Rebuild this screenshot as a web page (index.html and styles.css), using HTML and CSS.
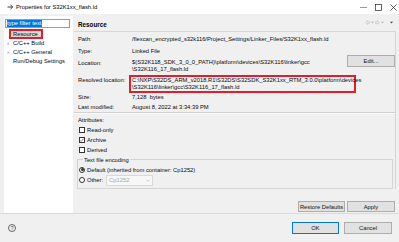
FILE: index.html
```html
<!DOCTYPE html>
<html>
<head>
<meta charset="utf-8">
<link rel="stylesheet" href="styles.css">
</head>
<body>
<div class="window">
  <div class="titlebar">
    <svg class="app-icon" width="7" height="6" viewBox="0 0 7 6"><path d="M0.5 3H5M3.5 1L5.8 3L3.5 5" fill="none" stroke="#3a3a3a" stroke-width="1"/></svg>
    <span class="title">Properties for S32K1xx_flash.ld</span>
    <div class="winctrls">
      <svg width="7" height="7" viewBox="0 0 7 7"><path d="M0 3.5H7" stroke="#555" stroke-width="0.6"/></svg>
      <svg width="7" height="7" viewBox="0 0 7 7"><rect x="0.5" y="0.5" width="6" height="6" fill="none" stroke="#222" stroke-width="0.7"/></svg>
      <svg width="7" height="7" viewBox="0 0 7 7"><path d="M0.5 0.5L6.5 6.5M6.5 0.5L0.5 6.5" stroke="#222" stroke-width="0.7"/></svg>
    </div>
  </div>
  <div class="main">
    <div class="sidebar">
      <div class="filter"><span class="sel">type filter text</span></div>
      <ul class="tree">
        <li class="item current"><span class="hl">Resource</span></li>
        <li class="item"><span class="exp">›</span>C/C++ Build</li>
        <li class="item"><span class="exp">›</span>C/C++ General</li>
        <li class="item"><span class="exp"></span>Run/Debug Settings</li>
      </ul>
    </div>
    <div class="content">
      <div class="header">
        <span class="heading">Resource</span>
        <div class="nav">
          <svg width="5" height="5" viewBox="0 0 5 5"><path d="M2.5 0.5L0.5 2.5L2.5 4.5V3.3H4.5V1.7H2.5Z" fill="none" stroke="#b5b5b5" stroke-width="0.5"/></svg>
          <svg width="3" height="3" viewBox="0 0 3 3"><path d="M0 0.8H3L1.5 2.4Z" fill="#b5b5b5"/></svg>
          <svg width="5" height="5" viewBox="0 0 5 5"><path d="M2.5 0.5L4.5 2.5L2.5 4.5V3.3H0.5V1.7H2.5Z" fill="none" stroke="#b5b5b5" stroke-width="0.5"/></svg>
          <svg width="3" height="3" viewBox="0 0 3 3"><path d="M0 0.8H3L1.5 2.4Z" fill="#b5b5b5"/></svg>
          <svg class="gap" width="3" height="3" viewBox="0 0 3 3"><path d="M0 0.8H3L1.5 2.4Z" fill="#444"/></svg>
        </div>
      </div>
      <div class="body">
        <div class="row r-path"><span class="lbl">Path:</span><span class="val">/flexcan_encrypted_s32k116/Project_Settings/Linker_Files/S32K1xx_flash.ld</span></div>
        <div class="row r-type"><span class="lbl">Type:</span><span class="val">Linked File</span></div>
        <div class="row r-loc">
          <span class="lbl">Location:</span>
          <span class="val two">$(S32K118_SDK_3_0_0_PATH)\platform\devices\S32K116\linker\gcc<br>\S32K116_17_flash.ld</span>
          <span class="btn edit">Edit...</span>
        </div>
        <div class="row r-res">
          <span class="lbl">Resolved location:</span>
          <span class="val redbox">C:\NXP\S32DS_ARM_v2018.R1\S32DS\S32SDK_S32K1xx_RTM_3.0.0\platform\devices<br>\S32K116\linker\gcc\S32K116_17_flash.ld</span>
        </div>
        <div class="row r-size"><span class="lbl">Size:</span><span class="val">7,128&nbsp; bytes</span></div>
        <div class="row r-mod"><span class="lbl">Last modified:</span><span class="val">August 8, 2022 at 3:34:39 PM</span></div>
        <div class="sep"></div>
        <div class="attrs-title">Attributes:</div>
        <div class="check"><span class="box"></span>Read-only</div>
        <div class="check"><span class="box"><svg width="6" height="6" viewBox="0 0 6 6"><path d="M1 3.2L2.4 4.6L5 1.4" fill="none" stroke="#333" stroke-width="0.6"/></svg></span>Archive</div>
        <div class="check"><span class="box"></span>Derived</div>
        <fieldset class="group">
          <legend>Text file encoding</legend>
          <div class="radio-row r1"><span class="radio on"></span>Default (inherited from container: Cp1252)</div>
          <div class="radio-row r2"><span class="radio"></span>Other:<span class="combo"><span>Cp1252</span><svg width="4" height="3" viewBox="0 0 4 3"><path d="M0.3 0.6L2 2.3L3.7 0.6" fill="none" stroke="#aaa" stroke-width="0.5"/></svg></span></div>
        </fieldset>
      </div>
      <div class="actions">
        <span class="btn restore">Restore Defaults</span>
        <span class="btn apply">Apply</span>
      </div>
    </div>
  </div>
  <div class="footer">
    <span class="help">?</span>
    <div class="footer-btns">
      <span class="btn ok">OK</span>
      <span class="btn cancel">Cancel</span>
    </div>
  </div>
</div>
</body>
</html>
```

FILE: styles.css
```css
html, body {
  margin: 0;
  padding: 0;
}
body {
  font-family: "Liberation Sans", Arial, sans-serif;
  font-size: 5.8px;
  color: #0a0a0a;
}
.window {
  width: 399px;
  height: 242px;
  background: #f0f0f0;
  overflow: hidden;
}
.titlebar {
  height: 14px;
  background: #ffffff;
  display: flex;
  align-items: center;
}
.app-icon {
  margin-left: 7px;
}
.title {
  margin-left: 2px;
  line-height: 8px;
  color: #000;
}
.winctrls {
  margin-left: auto;
  display: flex;
  gap: 8px;
  margin-right: 2px;
}
.main {
  height: 199px;
  display: flex;
  padding-left: 4px;
}
.sidebar {
  width: 69px;
  margin-top: 2px;
  background: #ffffff;
}
.filter {
  margin: 3px 0 0 1px;
  width: 62px;
  height: 7px;
  border: 1px solid #9a9a9a;
  padding: 0 0 0 1px;
  display: flex;
  align-items: center;
}
.sel {
  background: #0078d7;
  color: #fff;
  line-height: 7px;
  padding: 0 1px 0 0;
}
.tree {
  list-style: none;
  margin: 1px 0 0 0;
  padding: 0;
}
.item {
  height: 9px;
  line-height: 9px;
  display: flex;
  padding-left: 3px;
  white-space: nowrap;
}
.item.current {
  height: 10px;
  padding-left: 5px;
}
.hl {
  width: 28px;
  height: 6px;
  border: 2px solid #e31d2b;
  background: #d9d9d9;
  padding-left: 2px;
  line-height: 6px;
}
.exp {
  width: 6px;
  color: #7a7a7a;
  font-size: 6px;
}
.content {
  flex: 1;
  margin-left: 1px;
  margin-right: 3px;
  display: flex;
  flex-direction: column;
}
.header {
  border-bottom: 1px solid #d8d8d8;
  display: flex;
  align-items: flex-end;
  padding-left: 4px;
  box-sizing: border-box;
  height: 18px;
  padding-bottom: 2px;
}
.heading {
  font-weight: bold;
  font-size: 6.3px;
  line-height: 8px;
  color: #000;
}
.nav {
  margin-left: auto;
  align-self: center;
  display: flex;
  align-items: center;
  gap: 1px;
  margin-right: 3px;
  margin-top: 1px;
}
.nav .gap {
  margin-left: 5px;
}
.body {
  border-right: 1px solid #d4d4d4;
  height: 157px;
  box-sizing: border-box;
}
.row {
  display: grid;
  grid-template-columns: 54px 215px 48px;
  padding-left: 4px;
  line-height: 8px;
  white-space: nowrap;
}
.r-path { margin-top: 3px; }
.r-type { margin-top: 4px; }
.r-loc { margin-top: 0; }
.r-res { margin-top: 1px; }
.r-size { margin-top: 0; }
.r-mod { margin-top: 2.5px; }
.two {
  margin-top: 3.5px;
  line-height: 7.5px;
}
.r-loc .lbl {
  margin-top: 3.5px;
}
.redbox {
  margin-left: -3px;
  padding-left: 1px;
  width: 222px;
  border: 2px solid #e31d2b;
  line-height: 7.2px;
}
.r-res .lbl {
  margin-top: 1px;
}
.btn {
  display: flex;
  align-items: center;
  justify-content: center;
  background: #e1e1e1;
  border: 1px solid #adadad;
  box-sizing: border-box;
  color: #111;
  line-height: 8px;
}
.edit {
  width: 48px;
  height: 12px;
}
.sep {
  margin-top: 1px;
  height: 0;
  border-top: 1px solid #d2d2d2;
  border-bottom: 1px solid #fafafa;
}
.attrs-title {
  margin-top: 2px;
  padding-left: 4px;
  line-height: 8px;
}
.check {
  height: 10px;
  display: flex;
  align-items: center;
  padding-left: 5px;
  gap: 2px;
}
.attrs-title + .check {
  margin-top: 0.5px;
}
.box {
  width: 6px;
  height: 6px;
  border: 0.7px solid #333;
  background: #fff;
  box-sizing: border-box;
  display: flex;
}
.box svg {
  margin: -0.7px;
}
.group {
  margin: 1px 2px 0 3px;
  padding: 0 0 2px 1px;
  border: 1px solid #d4d4d4;
  min-inline-size: 0;
}
.group legend {
  padding: 0 1px;
  margin-left: 4px;
  line-height: 8px;
}
.radio-row {
  display: flex;
  align-items: center;
  gap: 2px;
}
.r1 {
  height: 10px;
  margin-top: 1px;
}
.r2 {
  height: 11px;
}
.radio {
  width: 6px;
  height: 6px;
  border: 0.7px solid #333;
  border-radius: 50%;
  background: #fff;
  box-sizing: border-box;
  display: flex;
  align-items: center;
  justify-content: center;
}
.radio.on::after {
  content: "";
  width: 3px;
  height: 3px;
  border-radius: 50%;
  background: #333;
}
.combo {
  margin-left: 1px;
  width: 47px;
  height: 11px;
  border: 1px solid #d9d9d9;
  background: #f7f7f7;
  box-sizing: border-box;
  display: flex;
  align-items: center;
  justify-content: space-between;
  padding: 0 2px 0 2px;
  color: #a8a8a8;
}
.actions {
  margin-top: 12px;
  display: flex;
  justify-content: flex-end;
  gap: 2px;
  padding-right: 1px;
}
.restore {
  width: 47px;
  height: 11px;
}
.apply {
  width: 48px;
  height: 11px;
}
.footer {
  border-top: 1px solid #dadada;
  height: 28px;
  display: flex;
  align-items: flex-start;
}
.help {
  margin: 10px 0 0 8px;
  width: 8px;
  height: 8px;
  box-sizing: border-box;
  border: 0.8px solid #666;
  border-radius: 50%;
  display: flex;
  align-items: center;
  justify-content: center;
  font-size: 5.5px;
  color: #555;
}
.footer-btns {
  margin-left: auto;
  margin-top: 8px;
  margin-right: 7px;
  display: flex;
  gap: 5px;
}
.ok {
  width: 47px;
  height: 12px;
  border-color: #0078d7;
}
.cancel {
  width: 48px;
  height: 12px;
}
```
